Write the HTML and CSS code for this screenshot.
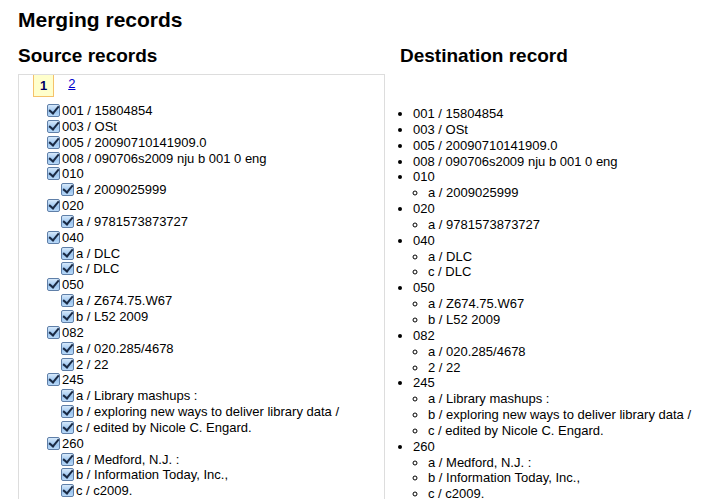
FILE: index.html
```html
<!DOCTYPE html>
<html>
<head>
<meta charset="utf-8">
<link rel="stylesheet" href="styles.css">
</head>
<body>
<h1 class="title">Merging records</h1>
<div class="columns">
  <div class="col-source">
    <h2 class="heading">Source records</h2>
    <div class="tabs">
      <ul class="tab-nav">
        <li class="tab active"><a href="#r1">1</a></li>
        <li class="tab"><a href="#r2">2</a></li>
      </ul>
      <div class="panel">
        <ul class="fields">
          <li><span class="cb"></span>001 / 15804854</li>
          <li><span class="cb"></span>003 / OSt</li>
          <li><span class="cb"></span>005 / 20090710141909.0</li>
          <li><span class="cb"></span>008 / 090706s2009 nju b 001 0 eng</li>
          <li><span class="cb"></span>010
            <ul class="subs"><li><span class="cb"></span>a / 2009025999</li></ul></li>
          <li><span class="cb"></span>020
            <ul class="subs"><li><span class="cb"></span>a / 9781573873727</li></ul></li>
          <li><span class="cb"></span>040
            <ul class="subs"><li><span class="cb"></span>a / DLC</li><li><span class="cb"></span>c / DLC</li></ul></li>
          <li><span class="cb"></span>050
            <ul class="subs"><li><span class="cb"></span>a / Z674.75.W67</li><li><span class="cb"></span>b / L52 2009</li></ul></li>
          <li><span class="cb"></span>082
            <ul class="subs"><li><span class="cb"></span>a / 020.285/4678</li><li><span class="cb"></span>2 / 22</li></ul></li>
          <li><span class="cb"></span>245
            <ul class="subs"><li><span class="cb"></span>a / Library mashups :</li><li><span class="cb"></span>b / exploring new ways to deliver library data /</li><li><span class="cb"></span>c / edited by Nicole C. Engard.</li></ul></li>
          <li><span class="cb"></span>260
            <ul class="subs"><li><span class="cb"></span>a / Medford, N.J. :</li><li><span class="cb"></span>b / Information Today, Inc.,</li><li><span class="cb"></span>c / c2009.</li></ul></li>
        </ul>
      </div>
    </div>
  </div>
  <div class="col-dest">
    <h2 class="heading">Destination record</h2>
    <ul class="dest">
      <li>001 / 15804854</li>
      <li>003 / OSt</li>
      <li>005 / 20090710141909.0</li>
      <li>008 / 090706s2009 nju b 001 0 eng</li>
      <li>010<ul><li>a / 2009025999</li></ul></li>
      <li>020<ul><li>a / 9781573873727</li></ul></li>
      <li>040<ul><li>a / DLC</li><li>c / DLC</li></ul></li>
      <li>050<ul><li>a / Z674.75.W67</li><li>b / L52 2009</li></ul></li>
      <li>082<ul><li>a / 020.285/4678</li><li>2 / 22</li></ul></li>
      <li>245<ul><li>a / Library mashups :</li><li>b / exploring new ways to deliver library data /</li><li>c / edited by Nicole C. Engard.</li></ul></li>
      <li>260<ul><li>a / Medford, N.J. :</li><li>b / Information Today, Inc.,</li><li>c / c2009.</li></ul></li>
    </ul>
  </div>
</div>
</body>
</html>
```

FILE: styles.css
```css
html, body {
  margin: 0;
  padding: 0;
  background: #fff;
}
body {
  font-family: "Liberation Sans", Arial, sans-serif;
  font-size: 13px;
  line-height: 15.85px;
  color: #000;
  padding: 8px 18px 0 18px;
}
.title {
  font-size: 21px;
  line-height: 24px;
  font-weight: bold;
  margin: 0 0 13px 0;
}
.columns {
  display: flex;
  gap: 15px;
}
.col-source {
  width: 367px;
  flex: none;
}
.col-dest {
  flex: 1;
}
.heading {
  font-size: 19px;
  line-height: 22px;
  font-weight: bold;
  margin: 0 0 7px 0;
}
.tabs {
  border: 1px solid #dddddd;
  border-bottom: none;
  padding: 0 0 0 14px;
}
.tab-nav {
  list-style: none;
  margin: 0;
  padding: 0;
  display: flex;
  gap: 8px;
  height: 22px;
  line-height: 16px;
}
.tab a {
  display: block;
  padding: 1px 6px 0 6px;
  height: 21px;
  color: #0000cc;
  text-decoration: underline;
  font-size: 13px;
}
.tab.active a {
  background: #ffffcc;
  border: 1px solid #f5c26a;
  border-top: none;
  color: #000066;
  font-weight: bold;
  text-decoration: none;
  padding: 3px 6px 0 6px;
  height: 18px;
}
.panel {
  padding: 6px 0 0 14px;
}
.fields, .subs {
  list-style: none;
  margin: 0;
  padding: 0;
}
.subs {
  padding-left: 14px;
}
.cb {
  display: inline-block;
  position: relative;
  width: 11px;
  height: 11px;
  border: 1px solid #5f7fa8;
  border-radius: 2px;
  background: linear-gradient(#d6e9fb, #9cc5ef 60%, #b9d9f8);
  vertical-align: -2px;
  margin-right: 2px;
}
.cb::after {
  content: "";
  position: absolute;
  left: 3px;
  top: -1px;
  width: 4px;
  height: 8px;
  border: solid #1a2a44;
  border-width: 0 2px 2px 0;
  transform: rotate(40deg);
}
.dest {
  margin: 0;
  padding: 0 0 0 13px;
  list-style: disc;
  padding-top: 32px;
}
.dest ul {
  margin: 0;
  padding-left: 15px;
  list-style: circle;
}
```
